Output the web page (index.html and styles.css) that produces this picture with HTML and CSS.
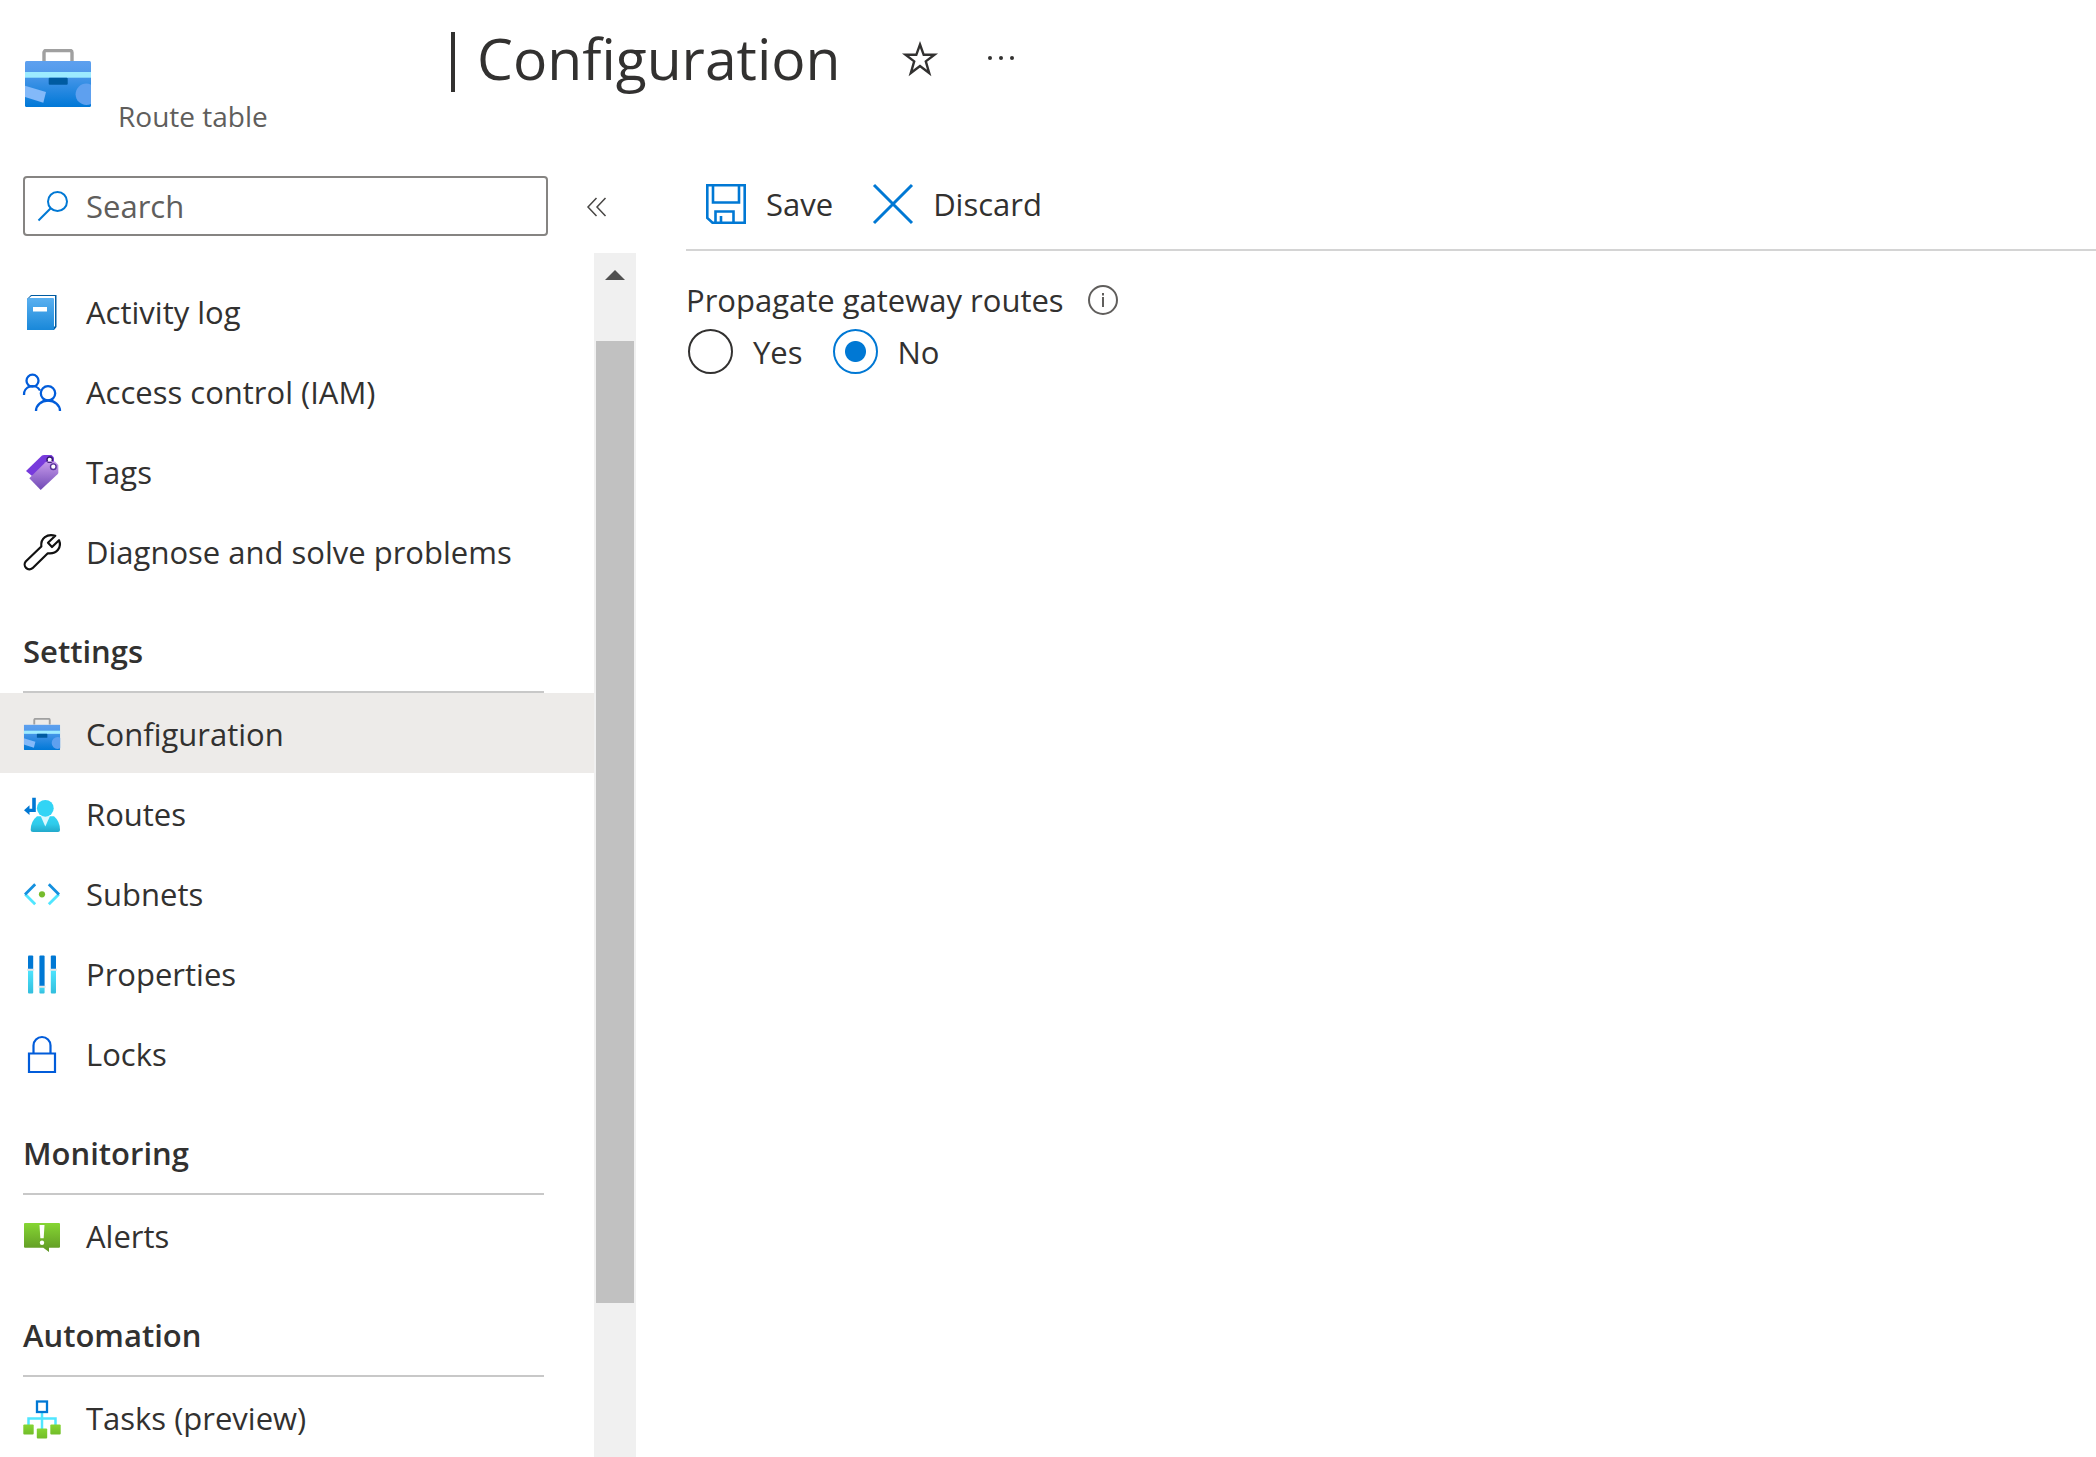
FILE: index.html
```html
<!DOCTYPE html>
<html lang="en">
<head>
<meta charset="utf-8">
<title>Configuration - Route table</title>
<link rel="stylesheet" href="styles.css">
</head>
<body>
<svg class="defs" aria-hidden="true">
  <defs>
    <linearGradient id="box" x1="0" y1="0" x2="0" y2="1"><stop offset="0" stop-color="#5ea0ef"/><stop offset=".2" stop-color="#559cec"/><stop offset="1" stop-color="#0078d7"/></linearGradient>
    <linearGradient id="book" x1="0" y1="0" x2="0" y2="1"><stop offset="0" stop-color="#5ab0f0"/><stop offset="1" stop-color="#1988d9"/></linearGradient>
    <linearGradient id="tag" x1="0" y1="0" x2="0" y2="1"><stop offset="0" stop-color="#c69aeb"/><stop offset="1" stop-color="#7049b5"/></linearGradient>
    <linearGradient id="user" x1="0" y1="0" x2="0" y2="1"><stop offset="0" stop-color="#32d4f5"/><stop offset=".5" stop-color="#2fcbea"/><stop offset="1" stop-color="#22a9cb"/></linearGradient>
    <linearGradient id="cyan" x1="0" y1="0" x2="0" y2="1"><stop offset="0" stop-color="#50e6ff"/><stop offset="1" stop-color="#32bedd"/></linearGradient>
    <linearGradient id="green" x1="0" y1="0" x2="0" y2="1"><stop offset="0" stop-color="#86d633"/><stop offset="1" stop-color="#5e9624"/></linearGradient>
    <linearGradient id="lime" x1="0" y1="0" x2="0" y2="1"><stop offset="0" stop-color="#86d633"/><stop offset="1" stop-color="#72bd2a"/></linearGradient>
    <clipPath id="case"><rect y="12" width="66" height="46" rx="1.5"/></clipPath>
  </defs>
  <symbol id="toolbox" viewBox="0 0 66 58">
    <path d="M19 12V3.5a2 2 0 0 1 2-2h24a2 2 0 0 1 2 2V12" fill="none" stroke="#a0a0a0" stroke-width="3.4"/>
    <g clip-path="url(#case)">
      <rect y="12" width="66" height="46" fill="url(#box)"/>
      <path d="M0 36.7 21 43l-2.700 10.700L0 48z" fill="#83b9f9"/>
      <circle cx="61.300" cy="45.300" r="10.700" fill="#5ea0ef"/>
      <rect y="23" width="66" height="5.700" fill="#9cebff"/>
      <rect x="23.700" y="28.700" width="19" height="7" rx="1" fill="#005ba1"/>
    </g>
  </symbol>
</svg>

<div class="blade">
  <header class="blade-header">
    <svg class="blade-icon" aria-hidden="true"><use href="#toolbox"/></svg>
    <div class="blade-titles">
      <div class="title-row">
        <h1><span class="divider"></span>Configuration</h1>
        <button class="icon-button" aria-label="Add to favorites">
          <svg width="34" height="36" viewBox="0 -1 34 36"><path d="M17 3.500 20.700 13.800H31.500L22.800 20.400 26.200 32 17 25 7.800 32 11.200 20.400 2.500 13.800H13.300Z" fill="none" stroke="#323130" stroke-width="2.400"/></svg>
        </button>
        <button class="icon-button" aria-label="More">
          <svg width="28" height="36" viewBox="0 0 28 36"><g fill="#323130"><circle cx="3" cy="18" r="2"/><circle cx="14" cy="18" r="2"/><circle cx="25" cy="18" r="2"/></g></svg>
        </button>
      </div>
      <p class="subtitle">Route table</p>
    </div>
  </header>

  <aside class="sidebar">
    <div class="search-row">
      <label class="search">
        <svg width="32" height="32" viewBox="0 0 32 32" fill="none" stroke="#0078d4" stroke-width="2" aria-hidden="true"><circle cx="20.500" cy="11.500" r="9.500"/><path d="M13.700 18.300 1.500 30.500"/></svg>
        <input type="search" placeholder="Search" aria-label="Search">
      </label>
      <button class="icon-button" aria-label="Collapse menu">
        <svg width="22" height="20" viewBox="0 0 22 20" fill="none" stroke="#484644" stroke-width="1.500"><path d="M10.500 2 2 11l8.500 9M19.500 2 11 11l8.500 9"/></svg>
      </button>
    </div>
    <div class="menu">
      <nav>
        <a class="item" href="#">
          <svg viewBox="0 0 38 38"><path d="M4 6 8 2h25.500v32L31 37H4z" fill="#005ba1"/><path d="M6 5 8.500 3H32v30l-2 2V5z" fill="#fff"/><path d="M4 6.500Q4 5 5.500 5H30q1 0 1 1v30q0 1-1 1H4z" fill="url(#book)"/><path d="M10 14h14v4.500H10z" fill="#fff"/></svg>
          Activity log</a>
        <a class="item" href="#">
          <svg viewBox="0 0 38 38" fill="none" stroke="#015cda" stroke-width="2.300"><circle cx="9.500" cy="7.700" r="6"/><path d="M1 22a8.500 8.300 0 0 1 16-4.500"/><circle cx="25" cy="20.300" r="7.200"/><path d="M13 38a12 10.500 0 0 1 24 0"/></svg>
          Access control (IAM)</a>
        <a class="item" href="#">
          <svg viewBox="0 0 38 38"><path d="M3 18 19 2.500Q20 2 21 2h7.500L31 4.500V12L9 23z" fill="#773adc"/><path d="M6.300 25.300 22.500 9.200q.8-.7 2-.7h7.500L35.300 12v7.500q0 1-.8 1.800L17.700 37z" fill="url(#tag)"/><g fill="#fff" stroke="#552f99" stroke-width="1.400"><circle cx="26.700" cy="6.700" r="2.700" stroke="#341a6e"/><circle cx="30.300" cy="13.700" r="2.800"/></g><path d="M24.500 8.600h5" stroke="#c69aeb" stroke-width="1"/></svg>
          Tags</a>
        <a class="item" href="#">
          <svg viewBox="0 0 38 38" fill="none" stroke="#111" stroke-width="2.200" stroke-linejoin="round"><path d="M18.300 13.500C17.500 5 24 .5 32.300 2.800L25 9.800l4 4.200 7-6.800C39 14 34 21.500 24.800 20.300L9.500 35.200A4.800 4.800 0 0 1 2.700 28.500z"/></svg>
          Diagnose and solve problems</a>

        <h2>Settings</h2>
        <a class="item selected" href="#" aria-current="page">
          <svg class="toolbox"><use href="#toolbox"/></svg>
          Configuration</a>
        <a class="item" href="#">
          <svg viewBox="0 0 38 38"><path d="M9.200 2.700h3.600V17H6.500v3L1 15.200l5.500-5v3.500h2.700z" fill="#0078d4"/><path d="M14 21.300h17q6 5 6 13.700 0 2-2 2H10q-2.300 0-2.300-2 0-8.700 6.300-13.700z" fill="url(#user)"/><path d="M17.700 21h9.300l-4.700 10.500z" fill="#d9f8fe"/><circle cx="22.300" cy="13.300" r="8.400" fill="#32d4f5"/></svg>
          Routes</a>
        <a class="item" href="#">
          <svg viewBox="0 0 38 38" fill="none" stroke-width="2.800"><path d="M12.200 29.300 2.200 19.300M25.800 29.300l10-10" stroke="#50e6ff"/><path d="M12.200 9.300 2 19.500M25.800 9.300 36 19.500" stroke="#1490df"/><circle cx="19" cy="19.300" r="3.100" fill="#76bc2d"/></svg>
          Subnets</a>
        <a class="item" href="#">
          <svg viewBox="0 0 38 38"><g fill="url(#cyan)"><rect x="5" y="14" width="5.200" height="24.500" rx="1"/><rect x="16.400" y="30" width="5.200" height="8.500" rx="1"/><rect x="27.800" y="14" width="5.200" height="24.500" rx="1"/></g><g fill="#0078d4"><rect x="5" y=".5" width="5.200" height="14" rx="1"/><rect x="16.400" y=".5" width="5.200" height="31" rx="1"/><rect x="27.800" y=".5" width="5.200" height="14" rx="1"/></g><path d="M4 14.800h7.200M26.800 14.800H34M15.400 31.800h7.200" stroke="#e6e6e6" stroke-width="2"/></svg>
          Properties</a>
        <a class="item" href="#">
          <svg viewBox="0 0 38 38" fill="none" stroke="#015cda" stroke-width="2.200"><path d="M10.500 18.500V10.500a8.500 8.500 0 0 1 17 0v8"/><path d="M6 18.500h26V37H6z"/></svg>
          Locks</a>

        <h2>Monitoring</h2>
        <a class="item" href="#">
          <svg viewBox="0 0 38 38"><path d="M2 6h34q1 0 1 1v22.700q0 1-1 1H26V35l-5.700-4.300H2q-1 0-1-1V7q0-1 1-1z" fill="url(#green)"/><path d="M16.500 8h5l-.8 13.300h-3.400z" fill="#fff"/><circle cx="19" cy="25.700" r="2.200" fill="#fff"/></svg>
          Alerts</a>

        <h2>Automation</h2>
        <a class="item" href="#">
          <svg viewBox="0 0 38 38"><path d="M19 14v16M5.500 27v-7.500h27V27" fill="none" stroke="#50e6ff" stroke-width="2.500"/><rect x="14" y="2.500" width="10" height="10.500" fill="#fff" stroke="#0078d4" stroke-width="2.300"/><g fill="url(#lime)"><rect x=".3" y="25.500" width="10.400" height="10" rx="1"/><rect x="13.800" y="29.500" width="10.400" height="10" rx="1"/><rect x="27.300" y="25.500" width="10.400" height="10" rx="1"/></g></svg>
          Tasks (preview)</a>
      </nav>
      <div class="scrollbar" aria-hidden="true">
        <div class="scroll-up"><svg width="20" height="10" viewBox="0 0 20 10"><path d="M0 10 10 0l10 10z" fill="#505050"/></svg></div>
        <div class="scroll-thumb"></div>
        <div class="scroll-rest"></div>
      </div>
    </div>
  </aside>

  <main>
    <div class="toolbar">
      <button class="command">
        <svg width="40" height="40" viewBox="0 0 40 40" fill="none" stroke="#0078d4" stroke-width="2.600"><path d="M1.300 1.300h37.400v37.400H6.500L1.300 34z"/><path d="M7 1.500v17h26v-17M9.500 38.500v-11h18v11M15 38v-6"/></svg>
        Save</button>
      <button class="command">
        <svg width="40" height="40" viewBox="0 0 40 40" fill="none" stroke="#0078d4" stroke-width="3"><path d="m1 1 38 38M39 1 1 39"/></svg>
        Discard</button>
    </div>
    <fieldset>
      <legend>Propagate gateway routes
        <svg width="30" height="30" viewBox="0 0 30 30" role="img" aria-label="Info"><circle cx="15" cy="15" r="14" fill="none" stroke="#605e5c" stroke-width="2"/><path d="M15 12v10M15 8v2.400" stroke="#605e5c" stroke-width="2"/></svg>
      </legend>
      <div class="options">
        <label><input type="radio" name="propagate" value="yes">Yes</label>
        <label><input type="radio" name="propagate" value="no" checked>No</label>
      </div>
    </fieldset>
  </main>
</div>
</body>
</html>
```
FILE: styles.css
```css
* {
  box-sizing: border-box;
}

body {
  margin: 0;
  background: #fff;
  color: #323130;
  font: 31px/40px "Segoe UI", "Open Sans", "Noto Sans", sans-serif;
}

button,
input {
  font: inherit;
  color: inherit;
}

button {
  padding: 0;
  border: 0;
  background: none;
}

svg {
  display: block;
  flex: none;
  overflow: visible;
}

.defs {
  position: absolute;
  width: 0;
  height: 0;
}

.blade {
  display: grid;
  grid-template: auto 1fr / 636px 1fr;
  height: 100vh;
  overflow: hidden;
}

/* Header */
.blade-header {
  grid-column: 1 / -1;
  display: flex;
  gap: 27px;
  height: 176px;
  padding-left: 25px;
}

.blade-icon {
  width: 66px;
  height: 58px;
  margin-top: 49px;
}

.title-row {
  display: flex;
  align-items: center;
  height: 96px;
  padding: 20px 0 0 333px;
}

h1 {
  display: flex;
  align-items: flex-end;
  gap: 22px;
  margin: 0 62px 0 0;
  font-size: 57px;
  font-weight: 400;
  line-height: 68px;
}

.divider {
  width: 4px;
  height: 60px;
  background: #323130;
}

.icon-button + .icon-button {
  margin-left: 50px;
}

.subtitle {
  margin: 0;
  color: #605e5c;
  font-size: 28px;
}

/* Sidebar */
.sidebar {
  display: flex;
  flex-direction: column;
  min-height: 0;
}

.search-row {
  display: flex;
  align-items: center;
  gap: 38px;
  padding-left: 23px;
}

.search {
  display: flex;
  align-items: center;
  gap: 17px;
  width: 525px;
  height: 60px;
  padding: 0 12px;
  border: 2px solid #868482;
  border-radius: 4px;
}

.search input {
  flex: 1;
  min-width: 0;
  padding: 0;
  border: 0;
  outline: 0;
  background: none;
}

.search input::placeholder {
  color: #605e5c;
  opacity: 1;
}

.menu {
  display: flex;
  flex: 1;
  min-height: 0;
  margin-top: 17px;
}

nav {
  flex: 1;
  padding-top: 18px;
  overflow: hidden;
}

.item {
  display: flex;
  align-items: center;
  gap: 25px;
  height: 80px;
  padding: 2px 0 0 23px;
  color: inherit;
  text-decoration: none;
  white-space: nowrap;
}

.item svg {
  width: 38px;
  height: 38px;
}

.item .toolbox {
  height: 32px;
}

.selected {
  background: #edebe9;
}

h2 {
  height: 102px;
  margin: 0 50px 0 23px;
  padding-top: 40px;
  border-bottom: 2px solid #c8c8c8;
  font-size: 31px;
  font-weight: 600;
  line-height: 40px;
}

.scrollbar {
  display: flex;
  flex-direction: column;
  width: 42px;
  padding: 0 2px;
  background: #f0f0f0;
}

.scroll-up {
  display: flex;
  justify-content: center;
  height: 88px;
  padding-top: 17px;
}

.scroll-thumb {
  flex: 962;
  background: #c1c1c1;
}

.scroll-rest {
  flex: 154;
}

/* Content */
main {
  padding-left: 50px;
}

.toolbar {
  display: flex;
  gap: 40px;
  height: 75px;
  padding: 0 0 18px 20px;
  border-bottom: 2px solid #d4d4d4;
}

.command {
  display: flex;
  align-items: center;
  gap: 20px;
}

fieldset {
  margin: 0;
  padding: 0;
  border: 0;
}

legend {
  display: flex;
  align-items: center;
  gap: 24px;
  padding: 29px 0 9px;
}

.options {
  display: flex;
  gap: 28px;
}

.options label {
  display: flex;
  align-items: center;
  gap: 20px;
}

input[type="radio"] {
  appearance: none;
  width: 45px;
  height: 45px;
  margin: 0 0 0 2px;
  border: 2px solid #323130;
  border-radius: 50%;
}

input[type="radio"]:checked {
  border-color: #0078d4;
  background: radial-gradient(circle, #0078d4 10px, transparent 11px);
}
```
